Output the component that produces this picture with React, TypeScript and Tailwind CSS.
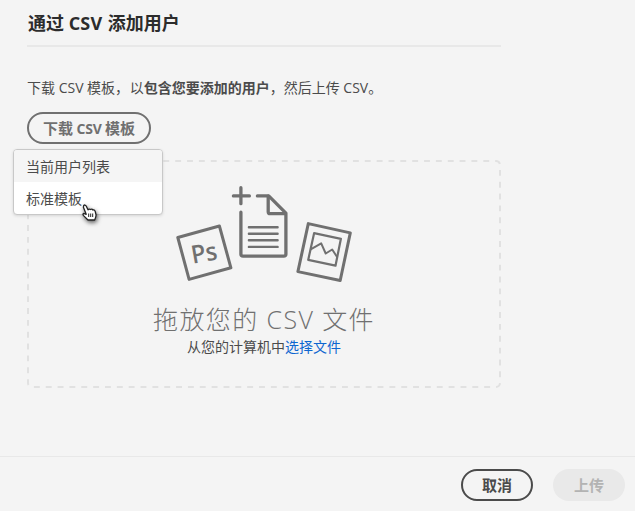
import React from "react";

function UploadArt() {
  return (
    <svg
      width="200"
      height="110"
      viewBox="165 178 200 110"
      fill="none"
      stroke="#707070"
      strokeLinecap="round"
      strokeLinejoin="round"
    >
      <g transform="translate(0.9 0.2)">
        <path d="M177.9 237.3 219.5 225.8 231 267.6 189.2 279.2Z" strokeWidth="3" />
        <text
          x="191.2"
          y="261.4"
          transform="rotate(-10 204 253)"
          fill="#707070"
          stroke="none"
          fontSize="25"
          fontWeight="600"
          textLength="26"
          lengthAdjust="spacingAndGlyphs"
          className="font-['Open_Sans','Noto_Sans',sans-serif]"
        >
          Ps
        </text>
        <g strokeWidth="3.3">
          <path d="M241 187.5V203.5M233.5 195.7H249.5" />
          <path d="M241 212V253.7Q241 255.9 243.2 255.9H283.8Q286 255.9 286 253.7V213L268.8 195.7H257.5" />
          <path d="M268.3 196V211.5Q268.3 213.5 270.3 213.5H285.5" />
        </g>
        <path d="M249 227.1H277.7M249 233.5H277.7M249 240.1H277.7M249 246.7H277.7" strokeWidth="2.4" />
        <path d="M308.4 223.4 350.4 232.7 340.3 280.3 298 271.4Z" strokeWidth="3" />
        <path d="M314.2 233 341 238.6 335.6 265.5 308.3 259.7Z" strokeWidth="2.2" />
        <path d="M311.2 249 321.3 243.2 325.8 253.3 332.3 249.3 336.7 256" strokeWidth="2" />
      </g>
    </svg>
  );
}

function HandCursor() {
  return (
    <svg
      className="absolute left-[68px] top-[54px] drop-shadow-[1px_2px_2px_rgba(0,0,0,0.6)]"
      width="17"
      height="18"
      viewBox="0 0 17 18"
      fill="white"
      stroke="#222"
      strokeWidth="1.3"
      strokeLinejoin="round"
    >
      <path d="M1.7 1.5Q3 .3 4.2 2L6 5.8Q7.2 4.6 8.5 5.5 10 4.6 11 6 12.6 5.5 13.2 7.4L14.1 11Q14 13 12.7 16H6L1.5 11.6Q.3 10 1.8 9.4L4.2 10.3 1.4 3.2Z" />
      <path d="M6.7 9.5V13M8.7 9.5V13M10.7 9.5V13" strokeWidth="1" />
    </svg>
  );
}

export default function App() {
  return (
    <div className="flex h-[511px] w-[635px] flex-col overflow-hidden bg-[#f4f4f4] font-['Open_Sans','Noto_Sans_CJK_SC',sans-serif] text-[14px] text-[#4b4b4b]">
      <main className="flex h-[456px] w-[501px] flex-col pl-[27px]">
        <h1 className="h-[47px] whitespace-nowrap border-b-2 border-[#e8e8e8] pt-[10px] text-[18px] font-bold leading-[26px] text-[#2c2c2c]">
          <span className="pl-px">通过 <span className="tracking-[0.2px]">CSV</span> <span className="ml-[0.8px]">添加用户</span></span>
        </h1>
        <p className="mt-[31px] h-5 whitespace-nowrap leading-5">
          下载 <span>CSV</span> 模板，<span className="ml-[0.6px]">以</span>
          <b>包含您要添加的用户</b>，然后上传 <span>CSV</span>。
        </p>
        <div className="relative mt-[14px] h-8">
          <button className="h-8 w-[124px] whitespace-nowrap rounded-full border-2 border-[#707070] text-center text-[15px] font-bold leading-[27px] text-[#707070]">
            下载 <span className="-mx-[0.5px] text-[14px] tracking-[-0.2px]">CSV</span> 模板
          </button>
          <div className="absolute left-[-14px] top-[37px] z-10 h-[66px] w-[150px] rounded-[4px] border border-[#c8c8c8] bg-white shadow-[0_1px_3px_rgba(0,0,0,0.12)]">
            <div className="h-8 rounded-t-[3px] bg-[#f5f5f5] pl-3 leading-[34px]">当前用户列表</div>
            <div className="h-8 pl-3 leading-[34px]">标准模板</div>
            <HandCursor />
          </div>
        </div>
        <section className="relative mt-4 flex h-[228px] w-[474px] flex-col items-center pt-[18px]">
          <svg className="absolute inset-0" width="474" height="228" fill="none">
            <rect x="1" y="1" width="472" height="226" rx="4" stroke="#e1e1e1" strokeWidth="2" strokeDasharray="5.9 5.95" strokeDashoffset="-1" />
          </svg>
          <div className="h-[110px] w-[200px]">
            <UploadArt />
          </div>
          <h2 className="mt-[13px] h-9 whitespace-nowrap text-[25px] font-light leading-9 tracking-[1.4px] text-[#707070]">
            拖放您的 CSV 文件
          </h2>
          <p className="h-5 leading-5">
            从您的计算机中<a className="text-[#0d66d0]">选择文件</a>
          </p>
        </section>
      </main>
      <footer className="flex h-[55px] justify-end gap-5 border-t border-[#e8e8e8] pr-[10px] pt-3">
        <button className="h-8 w-[72px] rounded-full border-2 border-[#4b4b4b] text-[15px] font-bold leading-[27px]">取消</button>
        <button className="h-8 w-[72px] rounded-full bg-[#e9e9e9] text-[15px] font-bold leading-[31px] text-[#b3b3b3]">上传</button>
      </footer>
    </div>
  );
}
